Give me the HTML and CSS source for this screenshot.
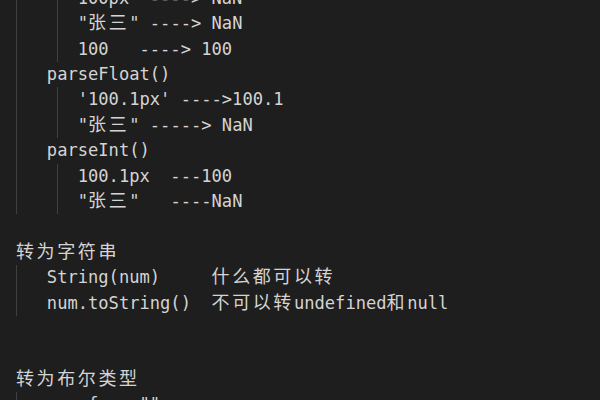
FILE: index.html
```html
<!DOCTYPE html>
<html lang="zh">
<head>
<meta charset="utf-8">
<title>notes</title>
<link rel="stylesheet" href="styles.css">
</head>
<body>
<div class="editor">
<div class="line g2">      100px  ----&gt; NaN</div>
<div class="line g2">      "<span class="cjk">张三</span>" ----&gt; NaN</div>
<div class="line g2">      100   ----&gt; 100</div>
<div class="line g1">   parseFloat()</div>
<div class="line g2">      '100.1px' ----&gt;100.1</div>
<div class="line g2">      "<span class="cjk">张三</span>" -----&gt; NaN</div>
<div class="line g1">   parseInt()</div>
<div class="line g2">      100.1px  ---100</div>
<div class="line g2">      "<span class="cjk">张三</span>"   ----NaN</div>
<div class="line"></div>
<div class="line"><span class="cjk">转为字符串</span></div>
<div class="line g1">   String(num)     <span class="cjk">什么都可以转</span></div>
<div class="line g1">   num.toString()  <span class="cjk">不可以转</span>undefined<span class="cjk">和</span>null</div>
<div class="line"></div>
<div class="line"></div>
<div class="line"><span class="cjk">转为布尔类型</span></div>
<div class="line g1">   var fn = ""</div>
</div>
</body>
</html>
```

FILE: styles.css
```css
html, body {
  margin: 0;
  padding: 0;
  background: #1e1e1e;
  width: 600px;
  height: 400px;
  overflow: hidden;
}

.editor {
  padding-left: 16px;
  margin-top: -14.2px;
  font-family: "DejaVu Sans Mono", "Noto Sans CJK SC", monospace;
  font-size: 17.1px;
  color: #d4d4d4;
}

.line {
  height: 25.4px;
  line-height: 25.4px;
  white-space: pre;
  background-repeat: no-repeat;
}

.cjk {
  font-family: "Noto Sans CJK SC", sans-serif;
  font-size: 18px;
  letter-spacing: 2.6px;
  line-height: 1;
}

.g1 {
  background-image: linear-gradient(#404040, #404040);
  background-size: 1px 100%;
  background-position: 0 0;
}

.g2 {
  background-image: linear-gradient(#404040, #404040), linear-gradient(#404040, #404040);
  background-size: 1px 100%, 1px 100%;
  background-position: 0 0, 41px 0;
}
```
